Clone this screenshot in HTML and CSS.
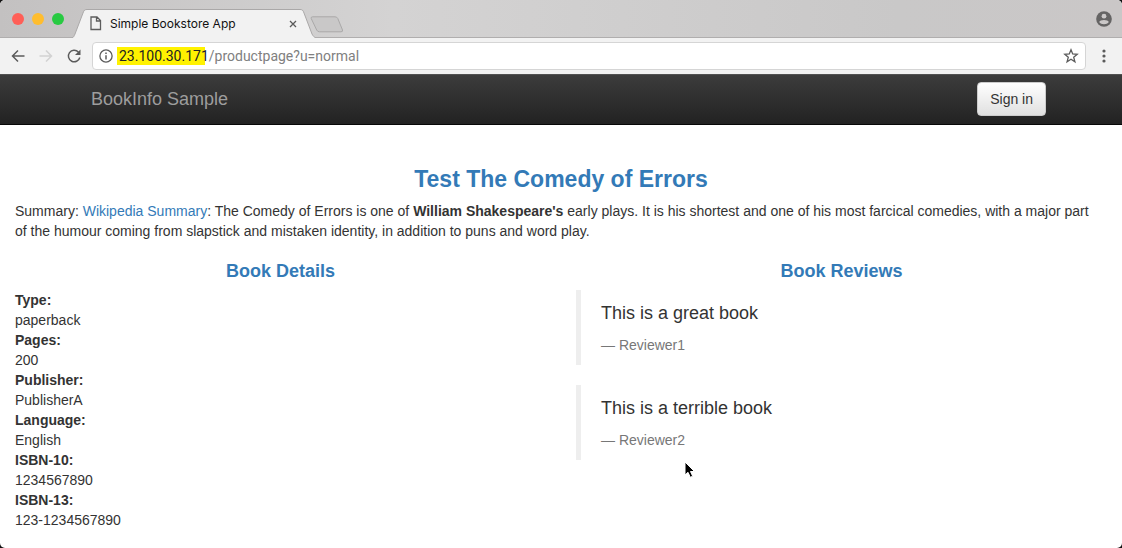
FILE: index.html
```html
<!DOCTYPE html>
<html lang="en">
<head>
<meta charset="utf-8">
<title>Simple Bookstore App</title>
<link rel="stylesheet" href="styles.css">
</head>
<body>
<div class="window">
  <header class="tab-strip">
    <div class="lights">
      <button class="light light-close" aria-label="Close window"></button>
      <button class="light light-min" aria-label="Minimize window"></button>
      <button class="light light-max" aria-label="Zoom window"></button>
    </div>
    <div class="tab">
      <svg class="tab-shape" viewBox="0 0 244 29" aria-hidden="true"><path d="M0 29 C2 28 2 27 3 25 L11 4 C12 1 13 .5 15 .5 H228 C230 .5 231 1 232 4 L240 25 C241 27 242 28 244 29" fill="#f2f2f2" stroke="#aaa8a8"/></svg>
      <svg class="icon-page" viewBox="0 0 12 15" aria-hidden="true"><path d="M1 1 H7 L10.500 4.500 V13.500 H1 Z M6.500 1 V5 H10.500" fill="none" stroke="#5d5d5d" stroke-width="1.300"/></svg>
      <span class="tab-title">Simple Bookstore App</span>
      <button class="tab-close" aria-label="Close tab"><svg class="icon-close" viewBox="0 0 8 8"><path d="M1 1 L7 7 M7 1 L1 7" stroke="#5a5a5a" stroke-width="1.300"/></svg></button>
    </div>
    <button class="new-tab" aria-label="New tab"><svg class="icon-new" viewBox="0 0 34 17"><path d="M2.500 .8 H25 Q27 .8 27.800 2.500 L32.500 14 Q33 15.800 31 15.800 H9.500 Q7.500 15.800 6.700 14 L1.200 2.500 Q.8 .8 2.500 .8Z" fill="#c9c8c8" stroke="#aaa9a9"/></svg></button>
    <button class="profile" aria-label="Profile"><svg class="icon-profile" viewBox="0 0 16 16"><circle cx="8" cy="8" r="7.800" fill="#656464"/><circle cx="8" cy="5.200" r="2.400" fill="#cbc8c8"/><path d="M3.200 11 C3.700 8.300 12.300 8.300 12.800 11 C10.900 14 5.100 14 3.200 11Z" fill="#cbc8c8"/></svg></button>
  </header>
  <div class="toolbar">
    <button class="tool" aria-label="Back"><svg class="icon-tool" viewBox="0 0 16 16"><path d="M14.500 8 H2.500 M8 2.500 L2.500 8 L8 13.500" fill="none" stroke="#5b5b5b" stroke-width="1.500"/></svg></button>
    <button class="tool" aria-label="Forward" disabled><svg class="icon-tool" viewBox="0 0 16 16"><path d="M1.500 8 H13.500 M8 2.500 L13.500 8 L8 13.500" fill="none" stroke="#d2d2d2" stroke-width="1.500"/></svg></button>
    <button class="tool" aria-label="Reload"><svg class="icon-tool" viewBox="0 0 16 16"><path d="M12.400 4 A5.800 5.800 0 1 0 13.800 9.500" fill="none" stroke="#5b5b5b" stroke-width="1.500"/><path d="M14.500 1.500 V7 H9Z" fill="#5b5b5b"/></svg></button>
    <div class="address">
      <svg class="icon-info" viewBox="0 0 14 14" aria-hidden="true"><circle cx="7" cy="7" r="6.100" fill="none" stroke="#5b5b5b" stroke-width="1.300"/><path d="M7 6.200 V10.500 M7 3.400 V5" stroke="#5b5b5b" stroke-width="1.500"/></svg>
      <span class="url"><span class="host">23.100.30.171</span>/productpage?u=normal</span>
      <button class="star" aria-label="Bookmark this page"><svg class="icon-star" viewBox="0 0 16 16"><path d="M8 1.800 L9.700 6 L14.200 6.300 L10.700 9.200 L11.900 13.700 L8 11.200 L4.100 13.700 L5.300 9.200 L1.800 6.300 L6.300 6Z" fill="none" stroke="#5b5b5b" stroke-width="1.300"/></svg></button>
    </div>
    <button class="menu" aria-label="Menu"><svg class="icon-menu" viewBox="0 0 4 14"><circle cx="2" cy="2" r="1.600"/><circle cx="2" cy="7" r="1.600"/><circle cx="2" cy="12" r="1.600"/></svg></button>
  </div>
  <nav class="navbar">
    <div class="container">
      <a class="brand" href="#">BookInfo Sample</a>
      <button class="sign-in">Sign in</button>
    </div>
  </nav>
  <main class="content">
    <h3 class="title">Test The Comedy of Errors</h3>
    <p class="summary">Summary: <a class="link" href="#">Wikipedia Summary</a>: The Comedy of Errors is one of <b>William Shakespeare's</b> early plays. It is his shortest and one of his most farcical comedies, with a major part of the humour coming from slapstick and mistaken identity, in addition to puns and word play.</p>
    <div class="columns">
      <section>
        <h4 class="subtitle">Book Details</h4>
        <dl class="details">
          <dt>Type:</dt><dd>paperback</dd>
          <dt>Pages:</dt><dd>200</dd>
          <dt>Publisher:</dt><dd>PublisherA</dd>
          <dt>Language:</dt><dd>English</dd>
          <dt>ISBN-10:</dt><dd>1234567890</dd>
          <dt>ISBN-13:</dt><dd>123-1234567890</dd>
        </dl>
      </section>
      <section>
        <h4 class="subtitle">Book Reviews</h4>
        <blockquote class="review"><p class="quote">This is a great book</p><footer class="reviewer">— Reviewer1</footer></blockquote>
        <blockquote class="review"><p class="quote">This is a terrible book</p><footer class="reviewer">— Reviewer2</footer></blockquote>
      </section>
    </div>
  </main>
  <svg class="cursor" viewBox="0 0 12 18" aria-hidden="true"><path d="M1 1 V14 L4 11.300 L6.300 16.300 L8.700 15.200 L6.500 10.500 H10.500Z" fill="#000" stroke="#fff"/></svg>
</div>
</body>
</html>
```
FILE: styles.css
```css
* { box-sizing: border-box; }
body {
  margin: 0;
  background: #111;
  font: 14px/20px "Liberation Sans", Arial, sans-serif;
  color: #333;
}
button {
  padding: 0;
  border: 0;
  background: none;
  font: inherit;
}
svg { display: block; }
.window {
  position: relative;
  min-height: 100vh;
  background: #fff;
  border-radius: 5px;
  overflow: hidden;
}
.tab-strip {
  display: flex;
  align-items: center;
  height: 38px;
  padding-right: 10px;
  background: linear-gradient(90deg, #c3c1c1, #d4d3d3 35%, #c9c8c8 80%, #cac7c7);
  border-bottom: 1px solid #b0aeae;
}
.lights {
  display: flex;
  gap: 8px;
  padding: 0 8px 0 12px;
}
.light {
  width: 12px;
  height: 12px;
  border-radius: 50%;
}
.light-close { background: #ff5f57; }
.light-min { background: #ffbd2e; }
.light-max { background: #28ca42; }
.tab {
  position: relative;
  align-self: flex-end;
  display: flex;
  align-items: center;
  width: 244px;
  height: 29px;
  margin-bottom: -1px;
  padding: 0 16px 0 18px;
}
.tab-shape {
  position: absolute;
  inset: 0;
}
.icon-page {
  position: relative;
  width: 12px;
  height: 15px;
}
.tab-title {
  position: relative;
  flex: 1;
  padding-left: 8px;
  font: 12px/18px Inter, sans-serif;
  color: #111;
}
.tab-close { position: relative; }
.icon-close {
  width: 8px;
  height: 8px;
  margin-right: 3px;
}
.new-tab { margin-top: 12px; margin-left: -6px; }
.icon-new {
  width: 34px;
  height: 17px;
}
.profile { margin-left: auto; }
.icon-profile {
  width: 16px;
  height: 16px;
}
.toolbar {
  display: flex;
  align-items: center;
  gap: 12px;
  height: 36px;
  padding: 0 16px 0 10px;
  background: #f2f2f2;
}
.icon-tool {
  width: 16px;
  height: 16px;
}
.address {
  flex: 1;
  display: flex;
  align-items: center;
  height: 28px;
  margin-left: -2px;
  margin-right: 4px;
  padding: 0 6px;
  background: #fff;
  border: 1px solid #d5d5d5;
  border-radius: 4px;
}
.icon-info {
  width: 14px;
  height: 14px;
}
.url {
  flex: 1;
  padding-left: 6px;
  font: 14px/18px Roboto, sans-serif;
  color: #808080;
}
.host {
  padding: 1px 0;
  margin-left: -2px;
  padding-left: 2px;
  color: #222;
  background: linear-gradient(#fff200, #fff200) no-repeat 0 0 / 96% 100%;
}
.icon-star {
  width: 16px;
  height: 16px;
}
.icon-menu {
  width: 4px;
  height: 14px;
  fill: #5b5b5b;
}
.navbar {
  border-top: 1px solid #515151;
  border-bottom: 1px solid #080808;
  background: linear-gradient(#3c3c3c, #222);
}
.container {
  display: flex;
  align-items: center;
  justify-content: space-between;
  max-width: 970px;
  min-height: 49px;
  margin: 0 auto;
  padding: 0 0 2px 15px;
}
.brand {
  font-size: 18px;
  color: #9d9d9d;
  text-decoration: none;
}
.sign-in {
  padding: 6px 12px;
  border: 1px solid #ccc;
  border-radius: 4px;
  background: linear-gradient(#fff, #e0e0e0);
  color: #333;
}
.content { padding: 41px 15px 18px; }
.title {
  margin: 0 0 9px;
  font-size: 23px;
  line-height: 26px;
  font-weight: 700;
  text-align: center;
  color: #337ab7;
}
.summary { margin: 0 0 20px; padding-right: 8px; }
.link { color: #337ab7; text-decoration: none; }
.columns {
  display: grid;
  grid-template-columns: 1fr 1fr;
  gap: 30px;
}
.subtitle {
  margin: 0 0 9px;
  font-size: 18px;
  line-height: 20px;
  font-weight: 700;
  text-align: center;
  color: #337ab7;
}
.details { margin: 0; }
.details dt { font-weight: 700; }
.details dd { margin: 0; }
.review {
  margin: 0 0 20px;
  padding: 11px 20px 10px;
  border-left: 5px solid #eee;
}
.quote {
  margin: 0 0 9px;
  font-size: 18px;
  line-height: 25px;
}
.reviewer { color: #777; }
.cursor {
  position: absolute;
  left: 684px;
  top: 461px;
  width: 12px;
  height: 18px;
}
```
